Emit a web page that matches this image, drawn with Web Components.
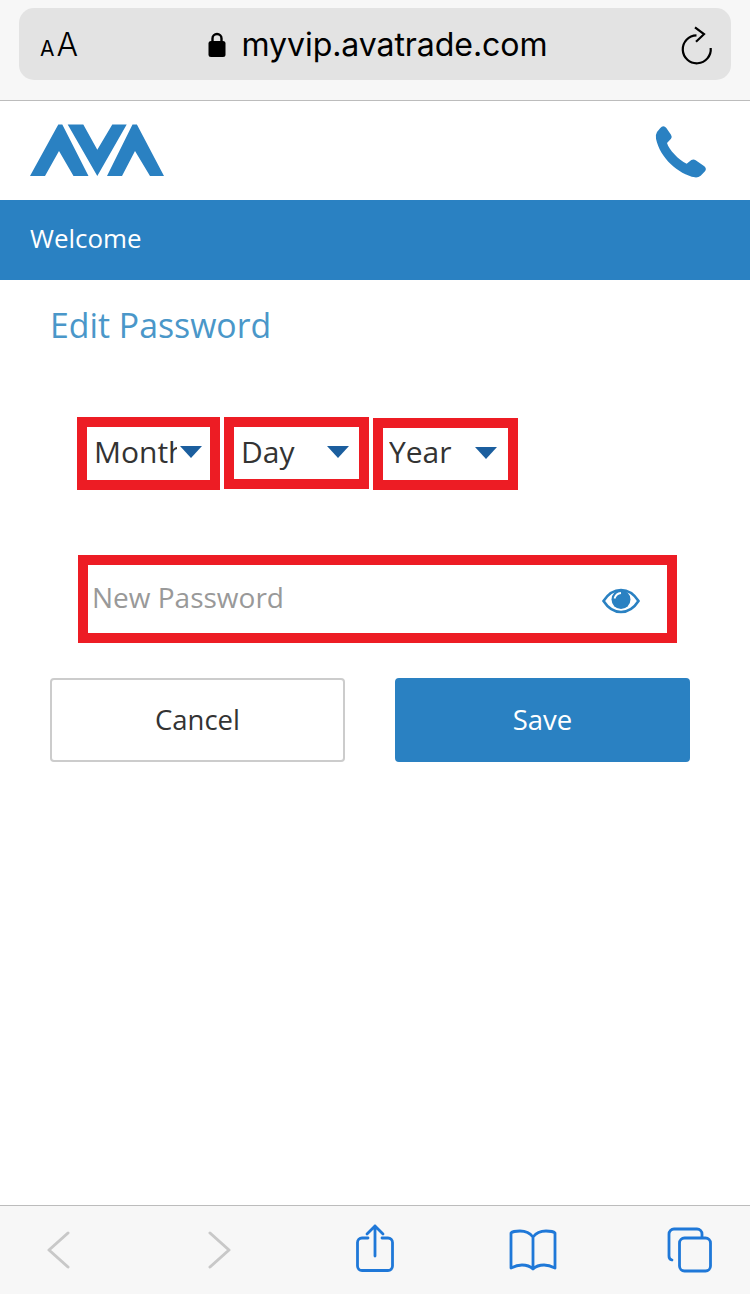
<!DOCTYPE html>
<html>
<head>
<meta charset="utf-8">
<title>Edit Password</title>
<style>
    html, body { margin: 0; padding: 0; background: #fff; }
    body { width: 750px; height: 1294px; font-family: "Open Sans", sans-serif; color: #333; overflow: hidden; }
    edit-page { height: 1294px; }
</style>
</head>
<body>
<edit-page></edit-page>
<script>
const BLUE = '#2a81c2';

class SafariBar extends HTMLElement {
    constructor() {
        super();
        this.attachShadow({ mode: 'open' });
    }
    connectedCallback() {
        this.shadowRoot.innerHTML = `
            <style>
                :host { display: block; box-sizing: border-box; height: 101px; padding: 8px 19px 0; background: #f7f7f7; border-bottom: 1px solid #bcbcbc; }
                #pill { display: flex; align-items: center; height: 72px; padding: 0 11px 0 21px; background: #e3e3e3; border-radius: 15px; color: #000; font-family: Inter, sans-serif; }
                #aa { width: 40px; white-space: nowrap; font-size: 32px; font-weight: 300; line-height: 72px; padding-top: 6px; }
                #aa small { font-size: 21px; font-weight: 400; margin-right: 2px; }
                #url { flex: 1; display: flex; align-items: center; justify-content: center; gap: 16px; font-size: 32.100px; letter-spacing: -0.1px; padding-left: 5px; }
                svg { display: block; }
            </style>
            <div id="pill">
                <span id="aa"><small>A</small>A</span>
                <div id="url">
                    <svg width="18" height="27" viewBox="0 0 18 27"><path d="M4.500 11V7.500a4.500 4.500 0 0 1 9 0V11" fill="none" stroke="#000" stroke-width="2.400"/><rect x="0.500" y="10" width="17" height="16" rx="2.500" fill="#000"/></svg>
                    <span>myvip.avatrade.com</span>
                </div>
                <svg width="50" height="50" viewBox="0 0 50 50" style="margin-top:2px" fill="none" stroke="#000" stroke-width="2.200"><path d="M26.500 15.300A14 14 0 1 0 40.700 28"/><path d="M25 7.300l9 6.900-8 7.500"/></svg>
            </div>
        `;
    }
}

class SiteHeader extends HTMLElement {
    constructor() {
        super();
        this.attachShadow({ mode: 'open' });
    }
    connectedCallback() {
        this.shadowRoot.innerHTML = `
            <style>
                :host { display: block; }
                #top { display: flex; align-items: center; justify-content: space-between; height: 99px; padding: 0 35px 0 30px; }
                #welcome { height: 80px; padding-left: 30px; background: ${BLUE}; color: #fff; font-size: 25.900px; line-height: 76px; }
                svg { display: block; }
            </style>
            <div id="top">
                <svg width="134" height="52" viewBox="0 0 134 52" style="margin-top:-1px">
                    <path fill="${BLUE}" d="M0 52L28.300.5h4L58.500 52H43.500L29 27 15 52z"/>
                    <path fill="${BLUE}" d="M37.700.5H53.300L67.300 25.700 82.300.5H96.700L67.300 52z"/>
                    <path fill="${BLUE}" d="M77 52L102.500.5h4.400L134 52H120L105 27 92 52z"/>
                </svg>
                <svg width="70" height="70" viewBox="0 0 210 210" style="margin-top:5px">
                    <path fill="${BLUE}" d="M55 25Q60 25 64 30L78 50Q82 56 78 62L66 75C72 95 100 125 125 137L139 126Q146 122 152 127L178 145Q186 152 180 160L167 173Q160 179 150 178C100 168 45 120 33 62Q31 50 36 42L46 30Q50 25 55 25z"/>
                </svg>
            </div>
            <div id="welcome">Welcome</div>
        `;
    }
}

class DateSelect extends HTMLElement {
    constructor() {
        super();
        this.attachShadow({ mode: 'open' });
    }
    connectedCallback() {
        this.shadowRoot.innerHTML = `
            <style>
                :host { display: block; box-sizing: border-box; position: relative; width: var(--w, 145px); height: var(--h, 73px); border: 10px solid #ed1c24; background: #fff; font-size: 30px; color: #333; }
                #label { display: block; overflow: hidden; white-space: nowrap; width: var(--label, 100px); margin-left: var(--pad, 7px); line-height: var(--lh, 50px); }
                #arrow { position: absolute; right: var(--arrow, 10px); top: 19px; width: 0; height: 0; border-left: 11px solid transparent; border-right: 11px solid transparent; border-top: 12px solid #1b5e9e; }
            </style>
            <span id="label"><slot></slot></span>
            <span id="arrow"></span>
        `;
    }
}

class PasswordField extends HTMLElement {
    constructor() {
        super();
        this.attachShadow({ mode: 'open' });
    }
    connectedCallback() {
        this.shadowRoot.innerHTML = `
            <style>
                :host { display: flex; align-items: center; justify-content: space-between; box-sizing: border-box; width: 599px; height: 88px; margin-left: 78px; padding: 0 27px 0 4px; border: 10px solid #ed1c24; background: #fff; color: #999; font-size: 28px; }
                svg { display: block; margin-top: 3px; }
                span { margin-top: -5px; }
            </style>
            <span><slot></slot></span>
            <svg width="38" height="26" viewBox="0 0 38 26">
                <path d="M1.500 13C6 6 12 2 19 2s13 4 17.500 11C32 20 26 24 19 24S6 20 1.500 13z" fill="none" stroke="${BLUE}" stroke-width="2.600"/>
                <circle cx="19" cy="11.500" r="9.500" fill="${BLUE}"/>
                <path d="M12.500 10.500A7.500 7.500 0 0 1 19 5" fill="none" stroke="#fff" stroke-width="1.800"/>
            </svg>
        `;
    }
}

class FormButton extends HTMLElement {
    constructor() {
        super();
        this.attachShadow({ mode: 'open' });
    }
    connectedCallback() {
        var primary = this.hasAttribute('primary');
        this.shadowRoot.innerHTML = `
            <style>
                :host { display: flex; align-items: center; justify-content: center; box-sizing: border-box; width: 295px; height: 84px; padding-bottom: 2px; border-radius: 4px; font-size: 27.500px;
                    border: 2px solid ${primary ? BLUE : '#ccc'}; background: ${primary ? BLUE : '#fff'}; color: ${primary ? '#fff' : '#333'}; }
            </style>
            <slot></slot>
        `;
    }
}

class ToolBar extends HTMLElement {
    constructor() {
        super();
        this.attachShadow({ mode: 'open' });
    }
    connectedCallback() {
        this.shadowRoot.innerHTML = `
            <style>
                :host { display: block; box-sizing: border-box; height: 89px; padding-left: 47px; background: #f7f7f7; border-top: 1px solid #bcbcbc; }
                #row { display: flex; align-items: center; height: 88px; }
                svg { display: block; fill: none; stroke-linecap: round; stroke-linejoin: round; }
            </style>
            <div id="row">
                <svg width="23" height="38" viewBox="0 0 23 38" stroke="#c8c8c8" stroke-width="3"><path d="M21 2L2 19l19 17"/></svg>
                <svg width="23" height="38" viewBox="0 0 23 38" stroke="#c8c8c8" stroke-width="3" style="margin-left:138px"><path d="M2 2l19 17L2 36"/></svg>
                <svg width="38" height="50" viewBox="0 0 38 50" stroke="#1f78d8" stroke-width="2.800" style="margin:-2px 0 0 125px"><path d="M12 14H6a4.500 4.500 0 0 0-4.500 4.500V42A4.500 4.500 0 0 0 6 46.500h26a4.500 4.500 0 0 0 4.500-4.500V18.500A4.500 4.500 0 0 0 32 14h-6"/><path d="M19 32V2M11 10l8-8 8 8"/></svg>
                <svg width="48" height="42" viewBox="0 0 48 42" stroke="#1f78d8" stroke-width="2.800" style="margin-left:115px"><path d="M24 8C21 4 17 2 11 2 6 2 3 3 2 4v35c4-2 7-3 11-3 5 0 8 1 11 4 3-3 6-4 11-4 4 0 7 1 11 3V4c-1-1-4-2-9-2-6 0-10 2-13 6zM24 8v31"/></svg>
                <svg width="46" height="46" viewBox="0 0 46 46" stroke="#1f78d8" stroke-width="2.800" style="margin-left:110px"><path d="M5 33a4 4 0 0 1-3-4V7a5 5 0 0 1 5-5h23a5 5 0 0 1 5 5v3"/><rect x="12.500" y="11" width="31" height="33" rx="5"/></svg>
            </div>
        `;
    }
}

class EditPage extends HTMLElement {
    constructor() {
        super();
        this.attachShadow({ mode: 'open' });
    }
    connectedCallback() {
        this.shadowRoot.innerHTML = `
            <style>
                :host { display: flex; flex-direction: column; height: 1294px; font-family: "Open Sans", sans-serif; }
                main { flex: 1; }
                h1 { margin: 23px 0 0 50px; font-size: 33.800px; line-height: 44px; font-weight: 400; color: #4a97c9; }
                #dates { display: flex; gap: 4px; margin: 70px 0 0 77px; }
                #month { --w: 143px; --label: 83px; --arrow: 8px; }
                #day { --h: 72px; --arrow: 10px; }
                #year { margin-top: 1px; --h: 72px; --pad: 6px; --lh: 48px; --arrow: 11px; }
                password-field { margin-top: 65px; }
                #buttons { display: flex; gap: 50px; margin: 35px 0 0 50px; }
            </style>
            <safari-bar></safari-bar>
            <site-header></site-header>
            <main>
                <h1>Edit Password</h1>
                <div id="dates">
                    <date-select id="month">Month</date-select>
                    <date-select id="day">Day</date-select>
                    <date-select id="year">Year</date-select>
                </div>
                <password-field>New Password</password-field>
                <div id="buttons">
                    <form-button>Cancel</form-button>
                    <form-button primary>Save</form-button>
                </div>
            </main>
            <tool-bar></tool-bar>
        `;
    }
}

window.customElements.define('safari-bar', SafariBar);
window.customElements.define('site-header', SiteHeader);
window.customElements.define('date-select', DateSelect);
window.customElements.define('password-field', PasswordField);
window.customElements.define('form-button', FormButton);
window.customElements.define('tool-bar', ToolBar);
window.customElements.define('edit-page', EditPage);
</script>
</body>
</html>
